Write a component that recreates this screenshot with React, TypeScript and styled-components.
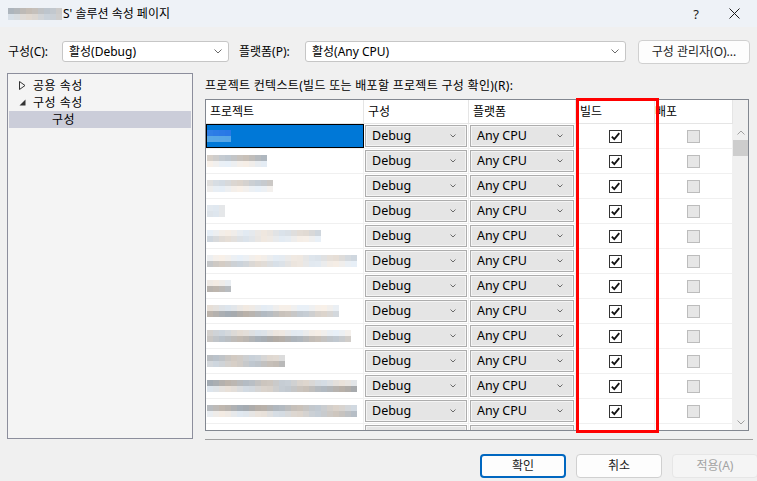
import React from "react";
import styled, { createGlobalStyle } from "styled-components";

const GlobalStyle = createGlobalStyle`
  html, body {
    margin: 0;
    padding: 0;
    background: #f0f0f0;
  }
  body {
    font-family: "Noto Sans", "Noto Sans CJK KR", sans-serif;
    font-size: 12px;
    color: #000;
  }
`;

const Window = styled.div`
  width: 757px;
  height: 481px;
  overflow: hidden;
  background: #f0f0f0;
  display: flex;
  flex-direction: column;
`;

const TitleBar = styled.div`
  height: 27px;
  flex: none;
  background: #eef2f7;
  display: flex;
  align-items: center;
  padding-left: 7px;
  font-size: 12px;
`;

const TitleText = styled.div`
  flex: 1;
  display: flex;
  align-items: center;
  gap: 1px;
  line-height: 16px;
`;

const TitleButton = styled.div<{ $w: number }>`
  width: ${(p) => p.$w}px;
  height: 27px;
  display: flex;
  align-items: center;
  justify-content: center;
  font-size: 13px;
  color: #1a1a1a;
`;

const ConfigBar = styled.div`
  display: flex;
  align-items: center;
  padding: 13px 0 0 8px;
  height: 23px;
`;

const Label = styled.span<{ $w: number }>`
  width: ${(p) => p.$w}px;
  flex: none;
  line-height: 16px;
`;

const Select = styled.div<{ $w: number; $gap?: number }>`
  width: ${(p) => p.$w}px;
  height: 21px;
  box-sizing: border-box;
  border: 1px solid #c6c6c6;
  border-radius: 3px;
  background: #ffffff;
  display: flex;
  align-items: center;
  padding: 0 6px 0 6px;
  margin-right: ${(p) => p.$gap ?? 10}px;
  flex: none;
  span {
    flex: 1;
    line-height: 16px;
  }
`;

const Button = styled.div<{ $w: number; $kind?: "default" | "disabled" }>`
  width: ${(p) => p.$w}px;
  height: 24px;
  box-sizing: border-box;
  border-radius: 4px;
  display: flex;
  align-items: center;
  justify-content: center;
  flex: none;
  line-height: 16px;
  background: ${(p) => (p.$kind === "disabled" ? "#f5f5f5" : "#fdfdfd")};
  color: ${(p) => (p.$kind === "disabled" ? "#a3a3a3" : "#1a1a1a")};
  border: ${(p) =>
    p.$kind === "default"
      ? "2px solid #0067c0"
      : p.$kind === "disabled"
      ? "1px solid #e6e6e6"
      : "1px solid #d0d0d0"};
`;

const Body = styled.div`
  display: flex;
  padding: 10px 0 0 7px;
`;

const Tree = styled.div`
  width: 186px;
  height: 366px;
  box-sizing: border-box;
  border: 1px solid #8c8e9c;
  background: #f4f4f4;
  padding: 3px 1px 0 1px;
`;

const TreeItem = styled.div<{ $indent: number; $selected?: boolean }>`
  height: 17px;
  display: flex;
  align-items: center;
  padding-left: ${(p) => p.$indent}px;
  background: ${(p) => (p.$selected ? "#cbcdd9" : "transparent")};
  line-height: 16px;
  letter-spacing: 0.5px;
`;

const Arrow = styled.span`
  width: 14px;
  display: flex;
  align-items: center;
`;

const Right = styled.div`
  margin-left: 12px;
  width: 545px;
  display: flex;
  flex-direction: column;
`;

const Caption = styled.div`
  height: 26px;
  display: flex;
  align-items: center;
  line-height: 16px;
  letter-spacing: 0.3px;
`;

const GridFrame = styled.div`
  position: relative;
  width: 544px;
  height: 332px;
  box-sizing: border-box;
  border: 1px solid #828790;
  display: flex;
  background: #ffffff;
`;

const GridMain = styled.div`
  flex: 1;
  overflow: hidden;
`;

const cols = "158px 105px 107px 79px 78px";

const HeaderRow = styled.div`
  display: grid;
  grid-template-columns: ${cols};
  height: 24px;
  background: #ffffff;
  border-bottom: 1px solid #e5e5e5;
  box-sizing: border-box;
`;

const HeaderCell = styled.div<{ $pad?: number }>`
  border-right: 1px solid #e5e5e5;
  display: flex;
  align-items: center;
  padding-left: ${(p) => p.$pad ?? 4}px;
  line-height: 16px;
`;

const Row = styled.div`
  display: grid;
  grid-template-columns: ${cols};
  height: 25px;
  box-sizing: border-box;
  border-bottom: 1px solid #f0f0f0;
`;

const Cell = styled.div<{ $center?: boolean; $selected?: boolean }>`
  border-right: 1px solid #f0f0f0;
  display: flex;
  align-items: center;
  justify-content: ${(p) => (p.$center ? "center" : "flex-start")};
  box-sizing: border-box;
  overflow: hidden;
  background: ${(p) => (p.$selected ? "#0078d7" : "transparent")};
  outline: ${(p) => (p.$selected ? "1px solid #000" : "none")};
  outline-offset: -1px;
`;

const Combo = styled.div`
  margin: 0 1px;
  flex: 1;
  height: 22px;
  box-sizing: border-box;
  border: 1px solid #adadad;
  box-shadow: inset 0 0 0 1px #f4f4f4;
  background: #e5e5e5;
  display: flex;
  align-items: center;
  padding: 0 10px 0 6px;
  span {
    flex: 1;
    font-size: 12.5px;
    line-height: 16px;
  }
`;

const CheckBox = styled.div<{ $disabled?: boolean }>`
  width: 13px;
  height: 13px;
  box-sizing: border-box;
  border: 1px solid ${(p) => (p.$disabled ? "#bcbcbc" : "#333333")};
  background: ${(p) => (p.$disabled ? "#e6e6e6" : "#ffffff")};
  display: flex;
  align-items: center;
  justify-content: center;
`;

const ScrollBar = styled.div`
  width: 15px;
  background: #f0f0f0;
  display: flex;
  flex-direction: column;
  align-items: center;
`;

const ScrollSpacer = styled.div<{ $h?: number }>`
  height: ${(p) => (p.$h ? `${p.$h}px` : "auto")};
  flex: ${(p) => (p.$h ? "none" : "1")};
`;

const ScrollArrow = styled.div`
  height: 16px;
  display: flex;
  align-items: center;
  justify-content: center;
`;

const Thumb = styled.div`
  width: 15px;
  height: 16px;
  background: #cdcdcd;
`;

const HighlightBox = styled.div`
  position: absolute;
  left: 370px;
  top: -2px;
  width: 83px;
  height: 335px;
  box-sizing: border-box;
  border: 3px solid #ff0000;
  pointer-events: none;
`;

const Separator = styled.div`
  height: 1px;
  background: #a0a0a0;
  margin-top: 8px;
  width: 548px;
`;

const Footer = styled.div`
  display: flex;
  justify-content: flex-end;
  gap: 10px;
  padding-top: 14px;
  margin-right: -8px;
`;

const MosaicGrid = styled.div<{ $cols: number }>`
  display: grid;
  grid-template-columns: repeat(${(p) => p.$cols}, 6px);
  grid-auto-rows: 6px;
  margin-left: 1px;
`;

const Chevron = ({
  color = "#6a6a6a",
  up = false,
  small = false,
}: {
  color?: string;
  up?: boolean;
  small?: boolean;
}) =>
  small ? (
    <svg width="6" height="4" viewBox="0 0 6 4">
      <path d="M0.5 0.5 L3 3 L5.5 0.5" fill="none" stroke={color} strokeWidth="1" />
    </svg>
  ) : (
    <svg width="8" height="5" viewBox="0 0 8 5">
      <path
        d={up ? "M0.5 4.5 L4 1 L7.5 4.5" : "M0.5 0.5 L4 4 L7.5 0.5"}
        fill="none"
        stroke={color}
        strokeWidth="1"
      />
    </svg>
  );

const Check = () => (
  <svg width="11" height="11" viewBox="0 0 11 11">
    <path d="M1.8 5.6 L4.3 8.2 L9.3 2.2" fill="none" stroke="#111" strokeWidth="1.8" />
  </svg>
);

// pixelated (blurred-out) project names
const Mosaic = ({ seed, width, blue }: { seed: number; width: number; blue?: boolean }) => {
  const n = Math.max(2, Math.round(width / 6));
  const cells: string[] = [];
  for (let r = 0; r < 2; r++) {
    for (let c = 0; c < n; c++) {
      const v = Math.abs(Math.sin(seed * 31.7 + r * 7.3 + c * 3.1));
      if (blue) {
        const l = 120 + Math.round(v * 60);
        cells.push(`rgb(${l - 90}, ${l - 10}, 230)`);
      } else {
        const g = 170 + Math.round(v * 70);
        const tint = Math.round(Math.sin(c + seed) * 8);
        cells.push(`rgb(${g + tint}, ${g}, ${g - tint})`);
      }
    }
  }
  return (
    <MosaicGrid $cols={n}>
      {cells.map((bg, i) => (
        <div key={i} style={{ background: bg }} />
      ))}
    </MosaicGrid>
  );
};

const names = [25, 62, 68, 20, 115, 148, 25, 130, 145, 75, 150, 150, 140];

export default function App() {
  return (
    <Window>
      <GlobalStyle />
      <TitleBar>
        <TitleText>
          <Mosaic seed={99} width={54} />
          <span>S' 솔루션 속성 페이지</span>
        </TitleText>
        <TitleButton $w={30}>?</TitleButton>
        <TitleButton $w={46}>
          <svg width="11" height="11" viewBox="0 0 11 11">
            <path d="M0.5 0.5 L10.5 10.5 M10.5 0.5 L0.5 10.5" stroke="#1a1a1a" strokeWidth="1" />
          </svg>
        </TitleButton>
      </TitleBar>

      <ConfigBar>
        <Label $w={54}>구성(C):</Label>
        <Select $w={167}>
          <span>활성(Debug)</span>
          <Chevron />
        </Select>
        <Label $w={66}>플랫폼(P):</Label>
        <Select $w={321} $gap={12}>
          <span>활성(Any CPU)</span>
          <Chevron />
        </Select>
        <Button $w={112}>구성 관리자(O)...</Button>
      </ConfigBar>

      <Body>
        <Tree>
          <TreeItem $indent={10}>
            <Arrow>
              <svg width="7" height="9" viewBox="0 0 7 9">
                <path d="M0.5 0.5 L6 4.5 L0.5 8.5 Z" fill="none" stroke="#333" strokeWidth="1" />
              </svg>
            </Arrow>
            공용 속성
          </TreeItem>
          <TreeItem $indent={10}>
            <Arrow>
              <svg width="7" height="7" viewBox="0 0 7 7">
                <path d="M6.5 0.5 L6.5 6.5 L0.5 6.5 Z" fill="#333" />
              </svg>
            </Arrow>
            구성 속성
          </TreeItem>
          <TreeItem $indent={43} $selected>
            구성
          </TreeItem>
        </Tree>

        <Right>
          <Caption>프로젝트 컨텍스트(빌드 또는 배포할 프로젝트 구성 확인)(R):</Caption>
          <GridFrame>
            <GridMain>
              <HeaderRow>
                <HeaderCell>프로젝트</HeaderCell>
                <HeaderCell>구성</HeaderCell>
                <HeaderCell>플랫폼</HeaderCell>
                <HeaderCell>빌드</HeaderCell>
                <HeaderCell $pad={0}>배포</HeaderCell>
              </HeaderRow>
              {names.map((w, i) => (
                <Row key={i}>
                  <Cell $selected={i === 0}>
                    <Mosaic seed={i + 1} width={w} blue={i === 0} />
                  </Cell>
                  <Cell>
                    <Combo>
                      <span>Debug</span>
                      <Chevron small />
                    </Combo>
                  </Cell>
                  <Cell>
                    <Combo>
                      <span>Any CPU</span>
                      <Chevron small />
                    </Combo>
                  </Cell>
                  <Cell $center>
                    <CheckBox>
                      <Check />
                    </CheckBox>
                  </Cell>
                  <Cell $center>
                    <CheckBox $disabled />
                  </Cell>
                </Row>
              ))}
            </GridMain>
            <ScrollBar>
              <ScrollSpacer $h={24} />
              <ScrollArrow>
                <Chevron up color="#a0a0a0" />
              </ScrollArrow>
              <Thumb />
              <ScrollSpacer />
              <ScrollArrow>
                <Chevron color="#a0a0a0" />
              </ScrollArrow>
            </ScrollBar>
            <HighlightBox />
          </GridFrame>
          <Separator />
          <Footer>
            <Button $w={86} $kind="default">확인</Button>
            <Button $w={86}>취소</Button>
            <Button $w={86} $kind="disabled">적용(A)</Button>
          </Footer>
        </Right>
      </Body>
    </Window>
  );
}
